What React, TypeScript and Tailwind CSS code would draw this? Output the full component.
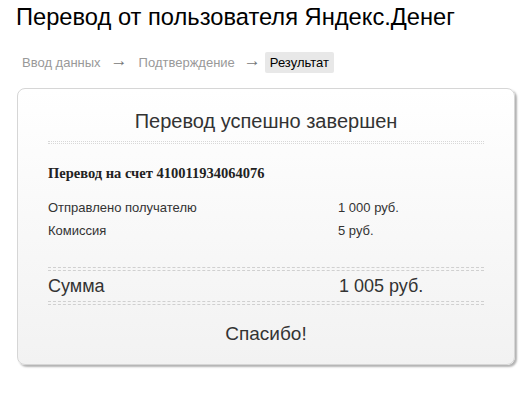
export default function App() {
  const arial = { fontFamily: '"Liberation Sans", Arial, sans-serif' };
  return (
    <div className="h-[400px] w-[525px] bg-white text-[#333]" style={arial}>
      <h1 className="pl-[16px] pt-[3px] text-[23.7px] leading-[28px] text-black">
        Перевод от пользователя Яндекс.Денег
      </h1>

      <nav className="mt-[21px] flex items-center pl-[22px] text-[13px] leading-[17px] text-[#999]">
        <span>Ввод данных</span>
        <span className="mb-[3px] ml-[10px] mr-[11px] text-[17px] leading-[14px] text-[#777]">→</span>
        <span>Подтверждение</span>
        <span className="mb-[3px] ml-[9px] mr-[4px] text-[17px] leading-[14px] text-[#777]">→</span>
        <span className="rounded-[2px] bg-[#e8e8e8] px-[5px] py-[2px] leading-[17px] text-black">
          Результат
        </span>
      </nav>

      <div className="ml-[17px] mt-[15px] h-[277px] w-[498px] rounded-[8px] border border-[#d6d6d6] bg-gradient-to-b from-white to-[#f2f2f2] px-[30px] shadow-[2px_2px_2px_rgba(0,0,0,0.3)]">
        <h2 className="pt-[18px] text-center text-[20px] leading-[28px] text-[#333]">
          Перевод успешно завершен
        </h2>
        <div className="mt-[6px] h-[3px] border-y border-dotted border-[#d8d8d8]" />

        <p
          className="mt-[20px] text-[14.5px] font-bold leading-[18px] text-[#222]"
          style={{ fontFamily: '"Liberation Serif", "Times New Roman", serif' }}
        >
          Перевод на счет 410011934064076
        </p>

        <div className="mt-[18px] space-y-[7px] text-[13px] leading-[16px] text-[#333]">
          <div className="flex">
            <span className="w-[290px]">Отправлено получателю</span>
            <span>1 000 руб.</span>
          </div>
          <div className="flex">
            <span className="w-[290px]">Комиссия</span>
            <span>5 руб.</span>
          </div>
        </div>

        <div className="mt-[28px] h-[4px] border-y border-dashed border-[#d0d0d0]" />
        <div className="flex py-[5px] text-[18px] leading-[20px] text-[#333]">
          <span className="w-[291px]">Сумма</span>
          <span>1 005 руб.</span>
        </div>
        <div className="h-[4px] border-y border-dashed border-[#d0d0d0]" />

        <p className="mt-[17px] text-center text-[19px] leading-[24px] text-[#333]">Спасибо!</p>
      </div>
    </div>
  );
}
